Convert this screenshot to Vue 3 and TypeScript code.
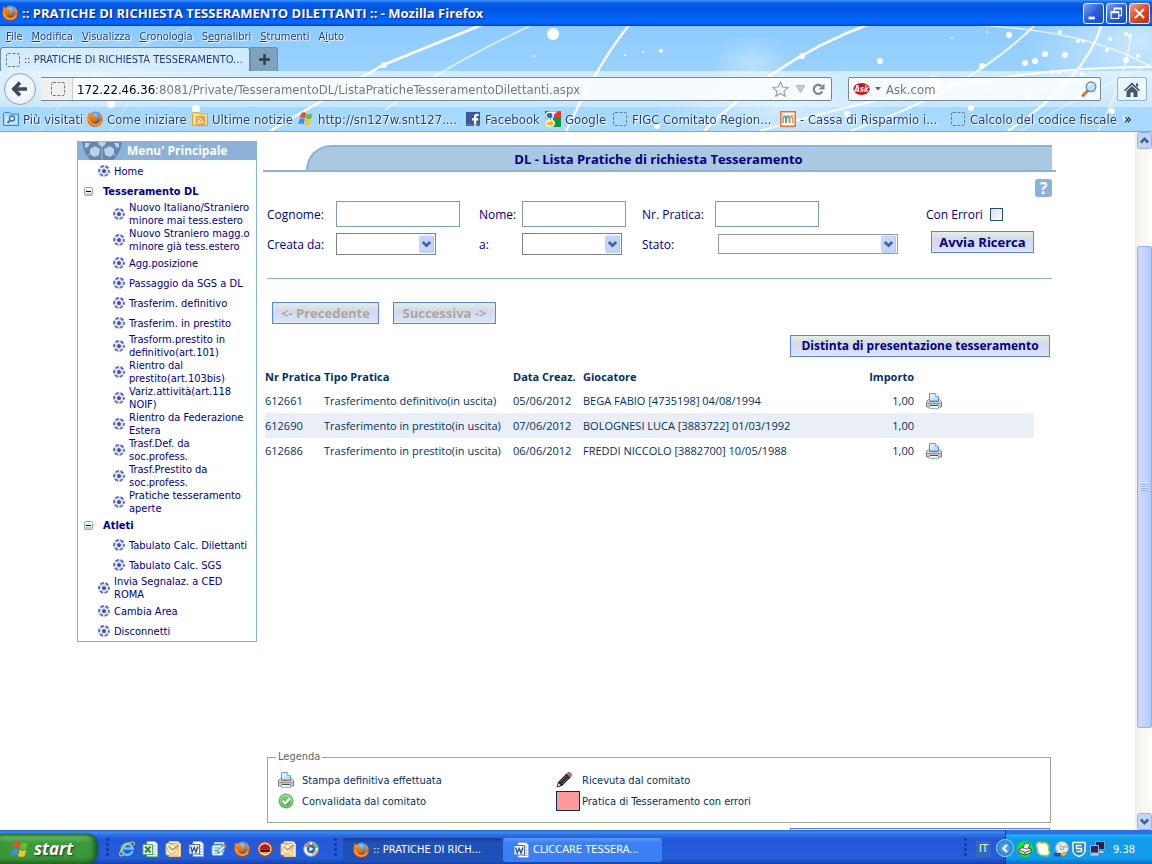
<script setup lang="ts">
import { ref } from 'vue'

interface MenuEntry { label: string; kind: 'top' | 'group' | 'sub' }
interface Pratica { nr: string; tipo: string; data: string; giocatore: string; importo: string; stampa: boolean }

const windowTitle = ':: PRATICHE DI RICHIESTA TESSERAMENTO DILETTANTI :: - Mozilla Firefox'

const appMenu = [
  ['', 'F', 'ile'], ['', 'M', 'odifica'], ['', 'V', 'isualizza'], ['', 'C', 'ronologia'],
  ['S', 'e', 'gnalibri'], ['', 'S', 'trumenti'], ['A', 'i', 'uto'],
]

const bookmarks = [
  { icon: 'visited', label: 'Più visitati' },
  { icon: 'firefox', label: 'Come iniziare' },
  { icon: 'rss', label: 'Ultime notizie' },
  { icon: 'windows', label: 'http://sn127w.snt127....' },
  { icon: 'facebook', label: 'Facebook' },
  { icon: 'google', label: 'Google' },
  { icon: 'blank', label: 'FIGC Comitato Region...' },
  { icon: 'cassa', label: '- Cassa di Risparmio i...' },
  { icon: 'blank', label: 'Calcolo del codice fiscale' },
]

const menu: MenuEntry[] = [
  { label: 'Home', kind: 'top' },
  { label: 'Tesseramento DL', kind: 'group' },
  { label: 'Nuovo Italiano/Straniero\nminore mai tess.estero', kind: 'sub' },
  { label: 'Nuovo Straniero magg.o\nminore già tess.estero', kind: 'sub' },
  { label: 'Agg.posizione', kind: 'sub' },
  { label: 'Passaggio da SGS a DL', kind: 'sub' },
  { label: 'Trasferim. definitivo', kind: 'sub' },
  { label: 'Trasferim. in prestito', kind: 'sub' },
  { label: 'Trasform.prestito in\ndefinitivo(art.101)', kind: 'sub' },
  { label: 'Rientro dal\nprestito(art.103bis)', kind: 'sub' },
  { label: 'Variz.attività(art.118\nNOIF)', kind: 'sub' },
  { label: 'Rientro da Federazione\nEstera', kind: 'sub' },
  { label: 'Trasf.Def. da\nsoc.profess.', kind: 'sub' },
  { label: 'Trasf.Prestito da\nsoc.profess.', kind: 'sub' },
  { label: 'Pratiche tesseramento\naperte', kind: 'sub' },
  { label: 'Atleti', kind: 'group' },
  { label: 'Tabulato Calc. Dilettanti', kind: 'sub' },
  { label: 'Tabulato Calc. SGS', kind: 'sub' },
  { label: 'Invia Segnalaz. a CED\nROMA', kind: 'top' },
  { label: 'Cambia Area', kind: 'top' },
  { label: 'Disconnetti', kind: 'top' },
]

const pratiche: Pratica[] = [
  { nr: '612661', tipo: 'Trasferimento definitivo(in uscita)', data: '05/06/2012', giocatore: 'BEGA FABIO [4735198] 04/08/1994', importo: '1,00', stampa: true },
  { nr: '612690', tipo: 'Trasferimento in prestito(in uscita)', data: '07/06/2012', giocatore: 'BOLOGNESI LUCA [3883722] 01/03/1992', importo: '1,00', stampa: false },
  { nr: '612686', tipo: 'Trasferimento in prestito(in uscita)', data: '06/06/2012', giocatore: 'FREDDI NICCOLO [3882700] 10/05/1988', importo: '1,00', stampa: true },
]

const quickLaunch = ['ie', 'excel', 'outlook', 'word', 'desktop', 'firefox', 'redball', 'outlook', 'player']
const tray = ['printgreen', 'leaf', 'disc', 'shield', 'network']

const cognome = ref('')
const nome = ref('')
const nrPratica = ref('')
const creataDa = ref('')
const creataA = ref('')
const stato = ref('')
const conErrori = ref(false)
const search = ref('')

const dots = [
  [553, 34, 6], [534, 56, 1], [625, 55, 1], [643, 52, 1], [661, 51, 2], [802, 56, 3], [384, 65, 3],
  [880, 61, 3], [982, 66, 3], [1009, 35, 3], [987, 32, 1], [952, 38, 1], [1025, 63, 3], [1035, 61, 3],
  [1045, 54, 3], [1065, 55, 3], [1060, 32, 2], [1078, 41, 2], [1083, 41, 2], [1110, 39, 2], [1126, 34, 2],
  [1130, 36, 2], [1107, 50, 2], [1126, 60, 3], [1138, 56, 2], [1052, 72, 2], [1059, 72, 2], [1082, 74, 2],
  [933, 83, 7], [1028, 98, 3], [1080, 92, 2], [1112, 111, 3], [971, 108, 3], [847, 114, 3], [1125, 118, 2],
  [111, 104, 4], [196, 109, 4], [564, 98, 3], [147, 60, 4], [12, 94, 3], [657, 126, 3], [1143, 87, 2],
]
</script>

<template>
  <div class="screen">
    <svg class="sprite" width="0" height="0" aria-hidden="true">
      <defs>
        <radialGradient id="gGlobe" cx=".5" cy=".3" r=".7"><stop offset="0" stop-color="#8fd0ff" /><stop offset="1" stop-color="#1a3c96" /></radialGradient>
        <linearGradient id="gFox" x1="0" y1="0" x2="0" y2="1"><stop offset="0" stop-color="#f9a11b" /><stop offset="1" stop-color="#d2430a" /></linearGradient>
        <linearGradient id="gPaper" x1="0" y1="0" x2="1" y2="1"><stop offset="0" stop-color="#f4faff" /><stop offset="1" stop-color="#a9d2f6" /></linearGradient>
        <linearGradient id="gMetal" x1="0" y1="0" x2="0" y2="1"><stop offset="0" stop-color="#fff" /><stop offset=".55" stop-color="#b5b5b5" /><stop offset="1" stop-color="#f0f0f0" /></linearGradient>
        <linearGradient id="gGreen" x1="0" y1="0" x2="0" y2="1"><stop offset="0" stop-color="#8fd489" /><stop offset="1" stop-color="#3c9e3a" /></linearGradient>
      </defs>
      <symbol id="firefox" viewBox="0 0 16 16">
        <circle cx="8.3" cy="6.8" r="6.400" fill="url(#gGlobe)" />
        <path d="M1.200 1.200C2 2.600 3 3 4 2.900 5.200 2.200 6.300 2.500 7 3.200 6.400 3.800 6.500 4.600 7.600 4.900L9 5.300C8.600 6.200 7.500 6.400 7.300 7.200 7.600 8.800 10 8.200 10.900 8.900 9.800 11 7 11.300 5.600 9.800 6.300 12.400 10.700 12.700 12 9.700 12.900 7.600 12.200 5 11 3.500 12.200 3.900 13 4.700 13.300 5.400 13.300 4 12.700 2.800 11.600 1.600 14.700 3.100 16 6 15.700 9 15.200 13 12.200 15.800 8.200 15.800 4 15.800.5 12.700.4 8.400.4 6 1.300 4.700 1.200 1.200Z" fill="url(#gFox)" />
        <path d="M2 8c.5 4 3.500 6 6.500 6 2.500 0 4.500-1.300 5.500-3.500" fill="none" stroke="#ffb52c" stroke-width="1.300" />
      </symbol>
      <symbol id="windows" viewBox="0 0 16 16">
        <path d="M3.100 2.200C4.900 1 6.400 1 8.200 2.200L7 7.200C5.300 6.100 3.700 6.100 1.800 7.200Z" fill="#e8512b" />
        <path d="M9 2.600c1.900 1.100 3.500 1.100 5.400 0L13.200 7.600c-1.900 1-3.500 1-5.400 0Z" fill="#78b82f" />
        <path d="M1.600 8.200C3.500 7 5 7 6.800 8.200L5.600 13.200C3.900 12.100 2.200 12.100.3 13.200Z" fill="#3f8ce0" />
        <path d="M7.600 8.600c1.900 1.100 3.500 1.100 5.400 0L11.800 13.600c-1.900 1.100-3.500 1.100-5.400 0Z" fill="#f5c12e" />
      </symbol>
      <symbol id="visited" viewBox="0 0 16 16">
        <path d="M.5 14.500v-12l1-1h5l1.500 1.500h7.500v11.500Z" fill="#a9d4f2" stroke="#3f83ba" />
        <path d="M2 5h12v8H2Z" fill="#c9e6fa" />
        <circle cx="9" cy="7.500" r="2.500" fill="#e9f6ff" stroke="#3779b3" stroke-width="1.500" /><path d="M7 9.500 4.500 12" stroke="#3779b3" stroke-width="2" />
      </symbol>
      <symbol id="rss" viewBox="0 0 16 16">
        <path d="M.5 14.500v-12l1-1h5l1.500 1.500h7.500v11.500Z" fill="#fbe08f" stroke="#d8a438" />
        <rect x="4" y="5" width="9" height="9" rx="1" fill="#ee9d33" />
        <path d="M5.500 7a5.500 5.500 0 0 1 5.500 5.500M5.500 9.500a3 3 0 0 1 3 3" fill="none" stroke="#fff" stroke-width="1.200" /><circle cx="6.200" cy="12" r=".9" fill="#fff" />
      </symbol>
      <symbol id="facebook" viewBox="0 0 16 16">
        <rect x="1" y="1" width="14" height="14" fill="#3b5998" /><path d="M9 15V9.500H7V7.300h2V6c0-2.200 1-3.200 3-3.200h1.600V5h-1.200C11.500 5 11.300 5.400 11.300 6.200v1.100h2.200l-.3 2.200h-1.900V15Z" fill="#fff" />
        <path d="M1 13.800h14" stroke="#6d84b4" />
      </symbol>
      <symbol id="google" viewBox="0 0 16 16">
        <path d="M9 0h7v6H9Z" fill="#e53935" /><path d="M8 6h8v10H8Z" fill="#15933f" /><path d="M0 0h9v5L7 8 3 9 0 7Z" fill="#2c62c9" /><path d="M0 10l4-1 5 2v4l-3 1H1l-1-1Z" fill="#f2b81c" />
        <path d="M5.200 1.300C7.500 1.300 8.300 3 8.300 4.500 8.300 6.600 6.500 7 6.500 8c0 1 2.800 1.800 2.800 4 0 2-1.800 3.300-4.300 3.300S.9 14.200.9 12.500C.9 10.700 2.700 9.900 4.700 9.700 4 9.200 4 8.400 4.200 7.700 2 7.800.8 6.300.8 4.600S2.300 1.300 4.500 1.300h6L9 2.400H7.200" fill="none" stroke="#fff" stroke-width="1.500" />
      </symbol>
      <symbol id="blank" viewBox="0 0 16 16"><rect x="1.500" y="1.500" width="13" height="13" rx="1.500" fill="none" stroke="#6f7b86" stroke-dasharray="3 1.500" /></symbol>
      <symbol id="cassa" viewBox="0 0 16 16">
        <rect x=".75" y=".75" width="14.500" height="14.500" fill="#fff" stroke="#ee6f2d" stroke-width="1.500" />
        <path d="M3 12V8c0-3 3-3 3 0v4" fill="none" stroke="#78839a" stroke-width="1.300" /><path d="M6.200 12V8c0-3 3.200-3 3.200 0v4" fill="none" stroke="#5f8c6c" stroke-width="1.300" /><path d="M9.800 12V8c0-3 3-3 3 0v4" fill="none" stroke="#d98a3c" stroke-width="1.300" /><path d="M2 4.500h12" stroke="#e3a06d" stroke-width=".8" />
      </symbol>
      <symbol id="ball" viewBox="0 0 12 12">
        <circle cx="6" cy="6" r="5.800" fill="#eceefb" />
        <circle cx="6" cy="6" r="4.900" fill="none" stroke="#5b69c4" stroke-width="2" stroke-dasharray="3.500 1.632" stroke-dashoffset="1.700" />
        <path d="M6 3.800 8.100 5.400 7.300 7.900H4.700L3.900 5.400Z" fill="#3d4db4" />
        <path d="M6 4V2M8 5.400l1.600-.6M7.200 7.700l1 1.500M4.800 7.700l-1 1.500M4 5.400l-1.600-.6" stroke="#bcc3ea" stroke-width=".8" />
      </symbol>
      <symbol id="minus" viewBox="0 0 9 9"><rect x=".5" y=".5" width="8" height="8" rx="1" fill="#f3f2ec" stroke="#7eb0d4" /><path d="M1 6h7v2H1Z" fill="#cfccc0" /><path d="M2 4.500h5" stroke="#000" /></symbol>
      <symbol id="printer" viewBox="0 0 16 16">
        <path d="M3.500 8V.6h6L12.500 3.500V8Z" fill="url(#gPaper)" stroke="#5a9bdc" /><path d="M9.500.6v3h3" fill="#fff" stroke="#5a9bdc" stroke-width=".7" />
        <path d="M2.500 6.500h1v2h9v-2h1l2 2v5.500H.5V8.500Z" fill="url(#gMetal)" stroke="#7d7d7d" />
        <path d="M3.500 12.500h9v3h-9Z" fill="#eef6ff" stroke="#6aa4dd" stroke-width=".8" /><path d="M2 10.500h12" stroke="#999" /><path d="M4 12.500h8" stroke="#555" />
      </symbol>
      <symbol id="check" viewBox="0 0 16 16"><circle cx="8" cy="8" r="7" fill="url(#gGreen)" stroke="#5bb357" /><circle cx="8" cy="8" r="5.500" fill="none" stroke="#c5ecc0" stroke-width=".7" /><path d="M4.500 7.800 7.200 10.500 11.700 5.600" fill="none" stroke="#fff" stroke-width="2.200" /></symbol>
      <symbol id="pencil" viewBox="0 0 16 16">
        <path d="M.5 15.500 2 10.200 10.500 1.500 14.500 5.500 6 14Z" fill="#1c1c1c" /><path d="M1.500 14.500 2.700 11.200 4.800 13.300Z" fill="#e8e8e8" /><path d="M4 10.500 10.500 4M6 12l6.500-6.500" stroke="#888" stroke-width="1" />
        <path d="M10.500 2 12 .5h2L15.500 2v2L14 5.500Z" fill="#d9655d" stroke="#444" stroke-width=".5" />
      </symbol>
      <symbol id="ie" viewBox="0 0 16 16">
        <path d="M13.500 10A5.500 5.500 0 1 1 13.700 7.600H4.500" fill="none" stroke="#6fc5f7" stroke-width="2.500" /><path d="M1 14.500C-1 11 9-.5 15 1.300M1 14.500c1.500 1 3-.2 4-.9M15 1.300c.8.700.4 2-.3 3" fill="none" stroke="#f3c440" stroke-width="1.100" />
      </symbol>
      <symbol id="excel" viewBox="0 0 16 16"><path d="M5 .5h8L15.500 3v12.500H5Z" fill="#fff" stroke="#8cc092" /><path d="M10.500 5h4M10.500 8h4M10.500 11h4M10.500 13.500h4" stroke="#9bcb9f" /><rect x="1" y="3.500" width="9.500" height="10" fill="#f4fbf4" stroke="#57a560" /><path d="M3 5.500l5.500 6M8.500 5.500 3 11.500" stroke="#2c8a38" stroke-width="2" /></symbol>
      <symbol id="outlook" viewBox="0 0 16 16"><path d="M4 .5h9L15.500 3v12.500H4Z" fill="#fff8e8" stroke="#f0c274" /><rect x="1" y="2.500" width="12" height="11.500" rx="1" fill="#fff3d0" stroke="#e7a643" /><circle cx="7" cy="8" r="4.300" fill="#fff" stroke="#e0a04a" /><path d="m4.500 6 3 3L13.500 4" fill="none" stroke="#cf8a2b" stroke-width="1.500" /></symbol>
      <symbol id="word" viewBox="0 0 16 16"><path d="M5 .5h8L15.500 3v12.500H5Z" fill="#fff" stroke="#8ca5dc" /><path d="M10.500 5h4M10.500 8h4M10.500 11h4M10.500 13.500h4" stroke="#86a2d9" /><rect x="1" y="3.500" width="10.500" height="9.500" fill="#f3f6fe" stroke="#4c70bd" /><path d="m2.700 5.500 1.500 5.500L6.200 6.500 8 11 9.900 5.500" fill="none" stroke="#2450a8" stroke-width="1.400" /></symbol>
      <symbol id="desktop" viewBox="0 0 16 16"><rect x="1" y="4" width="11" height="10.500" rx="2" fill="#f4faff" stroke="#58a8e8" /><path d="M3 2h9.500v8.500" fill="none" stroke="#b4dcfa" stroke-width="1.800" /><path d="M3.500 7h5M3.500 9.500h4M3.500 12h5" stroke="#3a84d0" /><path d="M7 9.500 12 4.500 14 6.500 9 11.500H7Z" fill="#fff" stroke="#276fc1" /><path d="m13 4 2 2" stroke="#e48a2c" stroke-width="2" /></symbol>
      <symbol id="redball" viewBox="0 0 16 16"><circle cx="8" cy="8" r="7.200" fill="#fff3df" stroke="#c0392b" stroke-width="1.400" /><path d="M2.500 8.500a5.500 5.500 0 0 1 11 0Z" fill="#b81f14" /><path d="M2.500 8.500h11L12.500 11h-9Z" fill="#3b1512" /><path d="M4 11h8L10.500 13h-5Z" fill="#e9a63b" /></symbol>
      <symbol id="player" viewBox="0 0 16 16"><circle cx="8" cy="8" r="7.300" fill="#eff3fa" stroke="#8ea4cc" /><path d="M2.500 6a6 6 0 0 1 4.500-3.500" stroke="#e6732c" stroke-width="1.800" fill="none" /><path d="M9 2.500a6 6 0 0 1 4.500 4.500" stroke="#5eb044" stroke-width="1.800" fill="none" /><path d="M13.500 9a6 6 0 0 1-4.500 4.500" stroke="#e9b93a" stroke-width="1.800" fill="none" /><circle cx="8" cy="8" r="4.200" fill="#2a5fc4" /><path d="M6.500 5.500v5L10.500 8Z" fill="#fff" /></symbol>
      <symbol id="printgreen" viewBox="0 0 16 16"><circle cx="8" cy="8" r="8" fill="#0ef015" /><path d="M2 8 8 5.500 14 8v4l-6 2-6-2Z" fill="#e9e9e9" stroke="#222" stroke-width=".8" /><path d="M6 7 8 2l5 1.200L10.500 8Z" fill="#fff" stroke="#333" stroke-width=".7" /><path d="m3 9.500 5 2 5-2" stroke="#555" fill="none" /><circle cx="8" cy="12.500" r=".8" fill="#d33" /></symbol>
      <symbol id="leaf" viewBox="0 0 16 16"><path d="M1.500 5C.5 1 5 .5 7 2c5-1.500 8 3 6.500 6.500C16 12 13.500 16 10 14.500 4 15.500 2 11 2.500 8.500Z" fill="#fff" stroke="#8ed236" stroke-width="1.600" /></symbol>
      <symbol id="disc" viewBox="0 0 16 16"><circle cx="9" cy="7" r="6.500" fill="#e4e9f5" stroke="#98a8cd" /><path d="M9 7 14 3a6 6 0 0 1 1 4Z" fill="#f4c05a" /><path d="M9 7 4 3a6 6 0 0 1 3-2Z" fill="#b8e5b4" /><circle cx="9" cy="7" r="1.700" fill="#fff" stroke="#8898bd" /><path d="M1 12h7v3.500H1Z" fill="#2f4f88" /><path d="m7 14 4-3 3 1-3 3.500Z" fill="#f2b94d" stroke="#a8741f" stroke-width=".6" /></symbol>
      <symbol id="shield" viewBox="0 0 16 16"><path d="M2 1.500h12v8c0 3-3.500 5-6 6-2.500-1-6-3-6-6Z" fill="#1f86b5" stroke="#fff" stroke-width="1.400" /><path d="M10.800 4.500H5.500v3h5v3H5.200" fill="none" stroke="#fff" stroke-width="1.500" /></symbol>
      <symbol id="network" viewBox="0 0 16 16"><rect x="6.500" y=".5" width="9" height="8" fill="#1b2452" stroke="#8c93b5" /><rect x="1.500" y="4.500" width="8" height="7.500" fill="#232d63" stroke="#a9aec9" /><path d="M1 14.500 3 12.500h6l1 2ZM10 10h4l1 2h-4Z" fill="#cfd2e2" /></symbol>
      <symbol id="chevron" viewBox="0 0 15 17"><rect width="15" height="17" rx="2" fill="#c3d5fd" /><path d="M.5 16.500h14V.5" fill="none" stroke="#b0c6f8" /><path d="m3.800 6.500 3.700 3.700 3.700-3.700" fill="none" stroke="#46618f" stroke-width="2.600" /></symbol>
    </svg>

    <header class="titlebar">
      <svg class="i16"><use href="#firefox" /></svg>
      <h1>{{ windowTitle }}</h1>
      <button class="winbtn" aria-label="Riduci a icona"><svg viewBox="0 0 21 21"><path d="M5 14h7v3H5Z" fill="#fff" /></svg></button>
      <button class="winbtn" aria-label="Ripristina"><svg viewBox="0 0 21 21"><path d="M8 8V5.500h8V13h-2.500M7.500 4.500H16.500M4.500 9.500H13V16H4.500ZM4 8.500h9.500" fill="none" stroke="#fff" stroke-width="1.300" /></svg></button>
      <button class="winbtn close" aria-label="Chiudi"><svg viewBox="0 0 21 21"><path d="m5.500 5.500 10 10M15.500 5.500l-10 10" stroke="#fff" stroke-width="2.300" /></svg></button>
    </header>

    <div class="chrome">
      <svg class="sky" viewBox="0 26 1152 105" preserveAspectRatio="xMidYMid slice" aria-hidden="true">
        <defs>
          <filter id="soft" x="-20%" y="-20%" width="140%" height="140%"><feGaussianBlur stdDeviation=".7" /></filter>
          <radialGradient id="cloud"><stop offset="0" stop-color="#fff" stop-opacity=".5" /><stop offset="1" stop-color="#fff" stop-opacity="0" /></radialGradient>
        </defs>
        <ellipse cx="752" cy="64" rx="40" ry="30" fill="url(#cloud)" opacity=".7" /><ellipse cx="80" cy="75" rx="170" ry="40" fill="url(#cloud)" /><ellipse cx="1140" cy="40" rx="120" ry="80" fill="url(#cloud)" /><ellipse cx="790" cy="110" rx="140" ry="40" fill="url(#cloud)" />
        <g fill="none" stroke="#fff" filter="url(#soft)">
          <path d="M270 131 383 65 484 24" stroke-width="2.600" /><path d="M385 110Q440 68 534 24" stroke-width="1.600" opacity=".7" />
          <path d="M630 24Q600 60 566 131" stroke-width="2.400" /><path d="M870 24Q780 56 704 131" stroke-width="2.400" />
          <path d="M1036 24Q970 90 850 131" stroke-width="1.800" opacity=".9" /><path d="M1102 24Q1085 80 1008 131" stroke-width="2.400" />
          <path d="M1152 67Q980 66 760 131" stroke-width="1.800" /><path d="M1131 35Q1125 80 1098 131" stroke-width="1.600" opacity=".7" />
          <path d="M930 24Q1100 24 1170 80" stroke-width="1.600" opacity=".7" /><path d="M1160 60Q1090 90 1020 131" stroke-width="1.200" opacity=".6" />
          <path d="M0 100Q50 60 72 30M190 26Q90 60 40 131M150 40Q140 90 110 131" stroke-width="1.200" opacity=".4" />
        </g>
        <g fill="#fff" filter="url(#soft)"><circle v-for="(d, i) in dots" :key="i" :cx="d[0]" :cy="d[1]" :r="d[2]" /></g>
      </svg>

      <nav class="appmenu">
        <a v-for="m in appMenu" :key="m.join('')" href="#">{{ m[0] }}<u>{{ m[1] }}</u>{{ m[2] }}</a>
      </nav>

      <div class="tabs">
        <button class="tab"><svg class="i16"><use href="#blank" /></svg><span>:: PRATICHE DI RICHIESTA TESSERAMENTO...</span></button>
        <button class="newtab" aria-label="Nuova scheda"><svg width="11" height="11" viewBox="0 0 11 11"><path d="M5.500 0v11M0 5.500h11" stroke="#2d3e4d" stroke-width="2.400" /></svg></button>
      </div>

      <div class="navbar">
        <button class="back" aria-label="Indietro"><svg width="18" height="18" viewBox="0 0 18 18"><path d="M9 2.500 2.800 9 9 15.500M3 9h13" fill="none" stroke="#3a4a57" stroke-width="3.600" /></svg></button>
        <div class="urlbar">
          <span class="site"><svg class="i16"><use href="#blank" /></svg></span>
          <a class="url" href="#"><b>172.22.46.36</b>:8081/Private/TesseramentoDL/ListaPraticheTesseramentoDilettanti.aspx</a>
          <svg width="17" height="16" viewBox="0 0 17 16"><path d="m8.500 1 2.200 5 5.300.5-4 3.600 1.200 5.200-4.700-2.800-4.700 2.800L5 10.100 1 6.500 6.300 6Z" fill="#f4f6f8" stroke="#99a1a8" stroke-width="1.200" /></svg>
          <svg width="9" height="8" viewBox="0 0 9 8"><path d="M0 .5h9L4.500 7.500Z" fill="#c5ccd4" stroke="#9aa3ad" stroke-width=".7" /></svg>
          <svg width="13" height="13" viewBox="0 0 13 13"><path d="M10.300 8.500A4.500 4.500 0 1 1 9.500 3.200" fill="none" stroke="#7b858f" stroke-width="2.200" /><path d="M12.500.5v6h-6Z" fill="#7b858f" /></svg>
        </div>
        <div class="searchbar">
          <svg width="17" height="14" viewBox="0 0 17 14"><ellipse cx="8.500" cy="7" rx="8.200" ry="6" fill="#c8141b" /><text x="8.500" y="10" text-anchor="middle" class="asklogo">Ask</text></svg>
          <svg width="6" height="4" viewBox="0 0 6 4"><path d="M0 0h6L3 3.500Z" fill="#666" /></svg>
          <input v-model="search" type="text" placeholder="Ask.com" aria-label="Cerca">
          <svg class="i16" viewBox="0 0 16 16"><path d="M7 9.500 2 14.500" stroke="#c8752a" stroke-width="3" stroke-linecap="round" /><circle cx="10" cy="5.800" r="4.800" fill="#bfe2fb" stroke="#5f8cc4" stroke-width="1.400" /><path d="M7.500 5a3 3 0 0 1 3-2.200" stroke="#fff" stroke-width="1.300" fill="none" /></svg>
        </div>
        <button class="home" aria-label="Home"><svg width="16" height="15" viewBox="0 0 16 15"><path d="M8 .5 16 8.200l-1 1L8 2.800l-7 6.400-1-1ZM12 1.500h2v4l-2-2Z" fill="#3f4b57" /><path d="M2.500 9 8 4l5.500 5v6H9.500v-4.500h-3V15h-4Z" fill="#4a5662" /></svg></button>
      </div>

      <nav class="bookmarks">
        <a v-for="b in bookmarks" :key="b.label" href="#"><svg class="i16"><use :href="'#' + b.icon" /></svg><span>{{ b.label }}</span></a>
        <button class="more" aria-label="Altri segnalibri">»</button>
      </nav>
    </div>

    <div class="viewport">
      <div class="page">
        <aside class="sidemenu">
          <h2>
            <svg width="40" height="18" viewBox="0 0 40 18">
              <path d="M0 0h40q-2 13-9 18H8Q2 12 0 0Z" fill="#6487ae" />
              <g fill="#b9d2ea"><path d="m13 4 5 3-1 6-5 2-4-3V7ZM28 4l4 3v5l-4 3-5-2-1-6ZM3 1h5L6 5 3 6ZM16 0h8l-1 3-3 2-3-2ZM37 1h-5l2 4 3 1Z" /></g>
              <path d="M20 5v13M8 12l-3 2M32 12l3 2" stroke="#87a8cb" stroke-width="1.500" />
            </svg>
            <span>Menu' Principale</span>
          </h2>
          <ul>
            <li v-for="e in menu" :key="e.label" :class="e.kind">
              <svg v-if="e.kind === 'group'" class="minus"><use href="#minus" /></svg>
              <svg v-else class="ball"><use href="#ball" /></svg>
              <a href="#">{{ e.label }}</a>
            </li>
          </ul>
        </aside>

        <main>
          <div class="heading"><h2>DL - Lista Pratiche di richiesta Tesseramento</h2></div>
          <div class="help"><button aria-label="Aiuto">?</button></div>

          <form class="filters" @submit.prevent>
            <label for="cognome">Cognome:</label>
            <input id="cognome" v-model="cognome" class="wide" type="text">
            <label for="nome">Nome:</label>
            <input id="nome" v-model="nome" type="text">
            <label for="nr">Nr. Pratica:</label>
            <input id="nr" v-model="nrPratica" type="text">
            <label class="errori">Con Errori <input v-model="conErrori" type="checkbox"></label>

            <label for="da">Creata da:</label>
            <span class="combo"><select id="da" v-model="creataDa"><option value="" /></select><svg><use href="#chevron" /></svg></span>
            <label for="a">a:</label>
            <span class="combo"><select id="a" v-model="creataA"><option value="" /></select><svg><use href="#chevron" /></svg></span>
            <label for="stato">Stato:</label>
            <span class="combo long"><select id="stato" v-model="stato"><option value="" /></select><svg><use href="#chevron" /></svg></span>
            <button class="xp go" type="submit">Avvia Ricerca</button>
          </form>

          <div class="pager">
            <button class="xp prev" disabled>&lt;- Precedente</button>
            <button class="xp next" disabled>Successiva -&gt;</button>
          </div>
          <div class="actions"><button class="xp distinta">Distinta di presentazione tesseramento</button></div>

          <div class="results">
            <table>
              <colgroup><col class="c1"><col class="c2"><col class="c3"><col><col class="c5"><col class="c6"></colgroup>
              <thead><tr><th>Nr Pratica</th><th>Tipo Pratica</th><th>Data Creaz.</th><th>Giocatore</th><th class="num">Importo</th><th /></tr></thead>
              <tbody>
                <tr v-for="p in pratiche" :key="p.nr">
                  <td>{{ p.nr }}</td><td>{{ p.tipo }}</td><td>{{ p.data }}</td><td>{{ p.giocatore }}</td><td class="num">{{ p.importo }}</td>
                  <td class="print"><svg v-if="p.stampa" class="i16"><use href="#printer" /></svg></td>
                </tr>
              </tbody>
            </table>
          </div>

          <fieldset>
            <legend>Legenda</legend>
            <div class="keys">
              <span><svg class="i16"><use href="#printer" /></svg>Stampa definitiva effettuata</span>
              <span><svg class="i16"><use href="#pencil" /></svg>Ricevuta dal comitato</span>
              <span><svg class="i16"><use href="#check" /></svg>Convalidata dal comitato</span>
              <span><i class="swatch" />Pratica di Tesseramento con errori</span>
            </div>
          </fieldset>
          <div class="actions bottom"><button class="xp distinta" aria-label="Distinta di presentazione" /></div>
        </main>
      </div>
      <div class="scrollbar">
        <svg class="arrow" viewBox="0 0 15 17"><rect x=".5" y=".5" width="14" height="16" rx="2" fill="#c3d5fd" stroke="#98b0e8" /><path d="m3.800 10.500 3.700-3.700 3.700 3.700" fill="none" stroke="#46618f" stroke-width="2.600" /></svg>
        <i class="before" /><i class="thumb"><b /></i><i class="after" />
        <svg class="arrow" viewBox="0 0 15 17"><rect x=".5" y=".5" width="14" height="16" rx="2" fill="#c3d5fd" stroke="#98b0e8" /><path d="m3.800 6.500 3.700 3.700 3.700-3.700" fill="none" stroke="#46618f" stroke-width="2.600" /></svg>
      </div>
    </div>

    <footer class="taskbar">
      <button class="start"><svg width="20" height="20"><use href="#windows" /></svg>start</button>
      <i class="grip" />
      <div class="quick"><button v-for="(q, i) in quickLaunch" :key="i" :aria-label="q"><svg class="i16"><use :href="'#' + q" /></svg></button></div>
      <i class="grip" />
      <button class="task active"><svg class="i16"><use href="#firefox" /></svg>:: PRATICHE DI RICH...</button>
      <button class="task"><svg class="i16"><use href="#word" /></svg>CLICCARE TESSERA...</button>
      <i class="grip last" />
      <span class="lang">IT</span>
      <div class="tray">
        <button class="expand" aria-label="Mostra icone nascoste"><svg width="8" height="9" viewBox="0 0 8 9"><path d="M6 .8 2.300 4.500 6 8.200" fill="none" stroke="#fff" stroke-width="2" /></svg></button>
        <svg v-for="t in tray" :key="t" class="i16"><use :href="'#' + t" /></svg>
        <time>9.38</time>
      </div>
    </footer>
  </div>
</template>

<style>
html, body { margin: 0; }
</style>

<style scoped>
.screen { --ui: "DejaVu Sans Condensed", "Noto Sans", sans-serif; --page: "Open Sans", "Noto Sans", sans-serif; height: 100vh; display: flex; flex-direction: column; overflow: hidden; background: #fff; font-family: var(--ui); font-size: 11px; color: #003163; }
.screen * { box-sizing: border-box; }
.sprite { position: absolute; }
.i16 { width: 16px; height: 16px; flex: none; }
button, input, select { font: inherit; color: inherit; padding: 0; margin: 0; }
button { border: 0; background: none; white-space: nowrap; }
a { color: inherit; text-decoration: none; }
h1, h2, ul { margin: 0; padding: 0; }

.titlebar { flex: none; height: 26px; display: flex; align-items: center; gap: 2px; padding: 0 2px 0 2px; background: linear-gradient(#3a93ff 0, #0a5fe8 3px, #0053e1 9px, #0264fb 18px, #0366ff 23px, #003dd0 26px); }
.titlebar h1 { flex: 1; padding-left: 2px; font: bold 13px/20px var(--page); color: #fff; text-shadow: 1px 1px 1px #0a1883; white-space: nowrap; }
.winbtn { width: 21px; height: 21px; border: 1px solid #fff; border-radius: 3px; background: linear-gradient(135deg, #7ea4f2, #2a5edb 50%, #1c47bd); }
.winbtn svg { display: block; width: 19px; height: 19px; }
.winbtn.close { background: linear-gradient(135deg, #f0a18a, #dd4b23 50%, #b8330c); }

.chrome { position: relative; flex: none; background: linear-gradient(#8dcbff, #9fd5fd 60%, #a9dbfd); border-bottom: 1px solid #a5a398; color: #1c3c8c; text-shadow: 0 0 2px #fff, 1px 1px 1px #fff; }
.sky { position: absolute; inset: 0; width: 100%; height: 100%; }
.chrome > :not(.sky) { position: relative; }
.appmenu { height: 21px; display: flex; align-items: center; gap: 9px; padding-left: 6px; }
.tabs { height: 24px; display: flex; }
.tab { width: 250px; display: flex; align-items: center; gap: 3px; padding-left: 4px; border: 1px solid #6d8ea9; border-bottom: 0; border-radius: 3px 3px 0 0; background: linear-gradient(#e6f3fdc0, #e6f4fdb0); text-align: left; text-shadow: none; }
.newtab { width: 28px; display: grid; place-items: center; border: 1px solid #6d8ea9; border-bottom: 0; border-radius: 0 3px 0 0; background: #7ea3be; }
.navbar { height: 36px; display: flex; align-items: center; padding: 0 5px 0 4px; background: linear-gradient(#ffffff90, #ffffff60); }
.back { width: 32px; height: 32px; display: grid; place-items: center; border: 1px solid #8da2b6; border-radius: 50%; background: radial-gradient(#fff, #e2edf6); z-index: 1; }
.urlbar { flex: 1; height: 24px; margin-left: 5px; display: flex; align-items: center; gap: 7px; padding-right: 6px; border: 1px solid #748898; border-left: 0; border-radius: 0 2px 2px 0; background: #fffc; text-shadow: none; }
.site { align-self: stretch; display: flex; align-items: center; padding: 0 6px 0 9px; border-right: 1px solid #ccc; background: #f0f0f0; }
.url { flex: 1; margin-left: -3px; font-size: 13px; color: #777; white-space: nowrap; overflow: hidden; }
.url b { font-weight: normal; color: #000; }
.searchbar { width: 253px; height: 24px; margin: 0 16px; display: flex; align-items: center; gap: 5px; padding: 0 3px 0 4px; border: 1px solid #748898; border-radius: 2px; background: #fffc; text-shadow: none; }
.asklogo { font: italic bold 8px var(--ui); fill: #fff; }
.searchbar input { flex: 1; min-width: 0; border: 0; outline: 0; background: none; font-size: 13px; }
.searchbar input::placeholder { color: #777; opacity: 1; }
.home { width: 30px; height: 24px; display: grid; place-items: center; border: 1px solid #8fb3cf; border-radius: 2px; background: #ffffff70; }
.bookmarks { height: 24px; display: grid; grid-template-columns: 84fr 105fr 106fr 167fr 80fr 67fr 168fr 170fr 174fr 28fr; align-items: center; padding-left: 3px; font-size: 13px; }
.bookmarks a { display: flex; align-items: center; gap: 4px; white-space: nowrap; }
.more { color: #000; font-size: 14px; text-align: left; }

.viewport { flex: 1; min-height: 0; display: flex; overflow: hidden; }
.page { flex: 1; max-width: 981px; margin: 0 auto; display: flex; align-items: flex-start; gap: 6px; padding-top: 9px; }
.sidemenu { width: 180px; flex: none; border: 1px solid #8cb2da; border-top: 0; color: #00008b; }
.sidemenu h2 { height: 19px; display: flex; align-items: center; gap: 5px; padding-left: 4px; background: #8cb2da; color: #fff; font: bold 12px/19px var(--page); }
.sidemenu ul { list-style: none; padding-top: 1px; }
.sidemenu li { min-height: 20px; display: flex; align-items: center; gap: 4px; line-height: 13px; white-space: pre-line; }
.ball { width: 12px; height: 12px; flex: none; }
.minus { width: 9px; height: 9px; }
.top { padding-left: 20px; }
.sub { padding-left: 35px; }
.group { padding-left: 6px; font-weight: bold; }
.sidemenu .group { gap: 10px; }

main { flex: 1; padding: 4px 6px 0 0; font-family: var(--page); color: #003163; }
.heading { height: 27px; margin-right: -4px; padding: 0 4px 0 43px; border-bottom: 2px solid #8cb2da; }
.heading h2 { height: 25px; padding-right: 43px; border-top: 2px solid #8cb2da; border-left: 2px solid #8cb2da; border-radius: 27px 0 0 0; background: #abc8e3; color: #000080; text-align: center; font: bold 13px/25px var(--page); }
.help { display: flex; justify-content: flex-end; padding: 7px 0 4px; }
.help button { width: 17px; height: 18px; border-radius: 3px; background: #8cb2da; color: #fff; font: bold 16px/18px var(--page); }
.filters { display: grid; grid-template-columns: 69px 143px 43px 120px 73px 1fr 126px; grid-template-rows: 26px 22px; row-gap: 6px; align-items: center; margin-left: 4px; padding-bottom: 23px; border-bottom: 1px solid #8cb2da; font-size: 12px; color: #000080; }
.filters input[type=text] { width: 104px; height: 26px; border: 1px solid #7f9db9; background: #fff; }
.filters input.wide { width: 124px; }
.errori { display: flex; align-items: center; gap: 7px; }
.errori input { appearance: none; width: 13px; height: 13px; border: 1px solid #1c5180; background: linear-gradient(135deg, #dcdcd7, #fff); }
.combo { display: inline-grid; width: 100px; height: 22px; }
.combo > * { grid-area: 1 / 1; }
.combo select { width: 100%; height: 100%; appearance: none; border: 1px solid #808080; border-radius: 0; background: #fff; }
.combo svg { width: 15px; height: 18px; justify-self: end; align-self: center; margin-right: 2px; pointer-events: none; }
.combo.long { width: 180px; height: 20px; margin-left: 3px; }
.combo.long select { border-color: #999; }
.xp { height: 22px; border: 1px solid #5b84d9; background: linear-gradient(#e4f0e4, #d5d9e8 35%, #d7e1ff 90%, #f2efdc); color: #000080; font: bold 13px/20px var(--page); text-align: center; }
.xp:disabled { color: #aaa899; }
.go { width: 103px; margin: -4px 0 0 5px; }
.pager { display: flex; gap: 14px; padding: 23px 0 0 9px; }
.prev { width: 107px; }
.next { width: 103px; }
.actions { display: flex; justify-content: flex-end; padding: 11px 2px 0 0; }
.actions.bottom { padding-top: 5px; }
.distinta { width: 260px; font-size: 12px; }
.results { min-height: 393px; padding: 7px 18px 0 2px; }
table { width: 100%; table-layout: fixed; border-collapse: collapse; }
.c1 { width: 59px; } .c2 { width: 189px; } .c3 { width: 70px; } .c5 { width: 60px; } .c6 { width: 120px; }
th, td { height: 25px; padding: 0; text-align: left; white-space: nowrap; }
th { height: 24px; }
.num { text-align: right; }
.print { padding-left: 12px; }
.print svg { display: block; }
tbody tr:nth-child(even) { background: #eaeff7; }
fieldset { margin: 0 1px 0 4px; padding: 6px 9px 8px 10px; height: 73px; border: 1px solid #a5a594; font-family: var(--ui); }
legend { padding: 0 2px; margin-left: -2px; line-height: 14px; color: #666; }
.keys { display: grid; grid-template-columns: 278px 1fr; row-gap: 1px; }
.keys span { height: 20px; display: flex; align-items: center; gap: 8px; }
.keys span:nth-child(even) { gap: 10px; }
.swatch { width: 24px; height: 20px; margin-right: -8px; border: 1px solid #003163; background: #ff9a9c; }

.scrollbar { width: 17px; flex: none; display: flex; flex-direction: column; align-items: center; border-left: 1px solid #eeede5; background: linear-gradient(90deg, #f3f1ec, #fefefb); }
.arrow { width: 15px; height: 17px; flex: none; }
.before { flex: 97; } .after { flex: 85; }
.thumb { flex: 482; width: 15px; display: grid; place-items: center; border: 1px solid #98b0e8; border-radius: 2px; background: linear-gradient(90deg, #cbdafd, #c0d2fc 70%, #afc6f8); }
.thumb b { width: 7px; height: 8px; background: repeating-linear-gradient(#eef4fe 0 1px, #8cb0f8 1px 2px); }

.taskbar { flex: none; height: 34px; display: flex; align-items: center; color: #fff; background: linear-gradient(#1c5bc4 0, #3f8cf0 2px, #2f6fe4 5px, #2358d8 9px, #245edb 28px, #1941a5 34px); }
.start { width: 97px; height: 30px; align-self: flex-end; display: flex; align-items: center; gap: 4px; padding-left: 10px; border-radius: 0 10px 10px 0; background: linear-gradient(#388b38, #62b562 10%, #3c9a3c 30%, #3a963a 80%, #27702a); box-shadow: inset -3px 0 5px #1d5c1d, 1px 0 2px #123f92; font: italic bold 17px/28px var(--page); text-shadow: 1px 1px 2px #183f18; }
.grip { width: 5px; height: 20px; margin-left: 8px; background: radial-gradient(circle, #0b3b9c 1px, transparent 2px) 0 0 / 5px 5px; }
.quick { display: flex; gap: 7px; margin: 4px 14px 0 9px; }
.quick button, .quick svg { display: block; }
.quick + .grip { margin: 0 5px 0 0; }
.task { width: 159px; height: 24px; margin-top: 5px; display: flex; align-items: center; gap: 4px; padding-left: 10px; border-radius: 3px; background: linear-gradient(#5d9bfb, #3b7ff4 20%, #3a80f3); }
.task.active { width: 160px; background: linear-gradient(#153c94, #1e51b9 20%, #1e52b7); }
.last { margin-left: auto; }
.lang { margin: 4px 5px 0 8px; padding: 0 3px; line-height: 16px; background: #316ac5; }
.tray { position: relative; align-self: stretch; margin-left: 9px; width: 147px; display: flex; align-items: center; gap: 2px; padding: 4px 17px 0 11px; border-left: 1px solid #12326f; background: linear-gradient(#2f6fe4 4px, #18b9f5 5px, #109bed 9px, #119cee 28px, #0b6cc4 34px); }
.expand { position: absolute; left: -10px; top: 9px; width: 18px; height: 18px; display: grid; place-items: center; border: 1px solid #9fd8fb; border-radius: 50%; background: radial-gradient(#58b4f5, #1568c8); }
.tray time { margin-left: auto; }
</style>
